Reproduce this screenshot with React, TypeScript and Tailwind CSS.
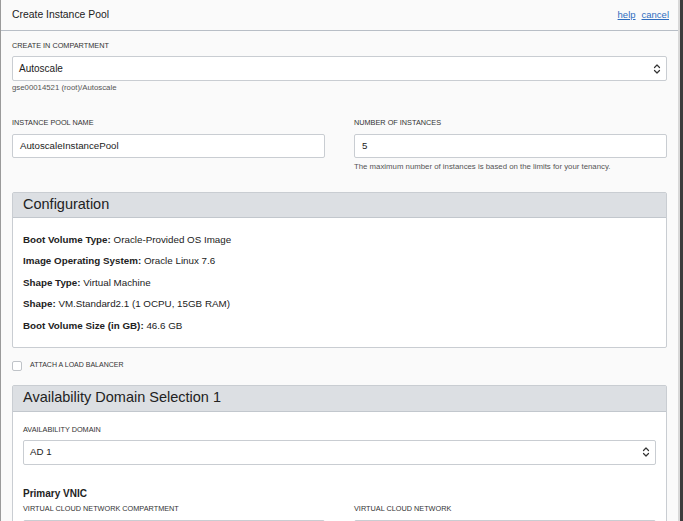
import React from "react";

const Chevrons = () => (
  <svg width="8" height="12" viewBox="0 0 8 12" fill="none" stroke="#333" strokeWidth="1.2" strokeLinecap="round" strokeLinejoin="round">
    <path d="M1.5 4.5 L4 2 L6.5 4.5" />
    <path d="M1.5 7.5 L4 10 L6.5 7.5" />
  </svg>
);

const Label = ({ children }: { children: React.ReactNode }) => (
  <div className="text-[7.3px] uppercase text-[#333] leading-none h-[8px]">{children}</div>
);

const Row = ({ k, v }: { k: string; v: string }) => (
  <div className="text-[9.8px] text-[#222] leading-none">
    <span className="font-bold">{k}</span> {v}
  </div>
);

export default function App() {
  return (
    <div className="w-[683px] h-[521px] bg-[#3c3c3c] overflow-hidden" style={{ fontFamily: '"Liberation Sans", Arial, sans-serif' }}>
      <div className="w-[680px] h-[521px] bg-[#fafafa] border-l border-l-[#9a9a9a] border-r-2 border-r-[#d8d8d8] overflow-hidden">
        {/* Header */}
        <div className="h-[31px] flex items-center justify-between pl-[11px] pr-[9px] border-b border-b-[#b8bec6]">
          <div className="text-[10.4px] text-[#222]">Create Instance Pool</div>
          <div className="flex gap-[6px] text-[9.5px] text-[#2f6dbf] underline">
            <span>help</span>
            <span>cancel</span>
          </div>
        </div>

        <div className="pl-[11px] pr-[11px]">
          {/* Compartment */}
          <div className="pt-[11px]">
            <Label>CREATE IN COMPARTMENT</Label>
            <div className="mt-[6px] h-[25px] bg-white border border-[#c9cdd2] rounded-[2px] flex items-center justify-between pl-[6px] pr-[5px]">
              <span className="text-[10px] text-[#222]">Autoscale</span>
              <Chevrons />
            </div>
            <div className="mt-[3px] text-[7.8px] text-[#555] leading-none">gse00014521 (root)/Autoscale</div>
          </div>

          {/* name / number */}
          <div className="mt-[27px] grid grid-cols-2 gap-[29px]">
            <div>
              <Label>INSTANCE POOL NAME</Label>
              <div className="mt-[7px] h-[24px] bg-white border border-[#c9cdd2] rounded-[2px] flex items-center pl-[7px]">
                <span className="text-[9.7px] text-[#222]">AutoscaleInstancePool</span>
              </div>
            </div>
            <div>
              <Label>NUMBER OF INSTANCES</Label>
              <div className="mt-[7px] h-[24px] bg-white border border-[#c9cdd2] rounded-[2px] flex items-center pl-[7px]">
                <span className="text-[9.7px] text-[#222]">5</span>
              </div>
              <div className="mt-[5px] text-[7.8px] text-[#555] leading-none">The maximum number of instances is based on the limits for your tenancy.</div>
            </div>
          </div>

          {/* Configuration */}
          <div className="mt-[21px] border border-[#c9cdd2] rounded-[2px] bg-white">
            <div className="h-[25px] bg-[#dcdfe3] border-b border-b-[#c2c7cd] flex items-center pl-[10px]">
              <span className="text-[14.5px] text-[#222]">Configuration</span>
            </div>
            <div className="pl-[10px] pt-[17px] pb-[17px] flex flex-col gap-[11.7px]">
              <Row k="Boot Volume Type:" v="Oracle-Provided OS Image" />
              <Row k="Image Operating System:" v="Oracle Linux 7.6" />
              <Row k="Shape Type:" v="Virtual Machine" />
              <Row k="Shape:" v="VM.Standard2.1 (1 OCPU, 15GB RAM)" />
              <Row k="Boot Volume Size (in GB):" v="46.6 GB" />
            </div>
          </div>

          {/* checkbox */}
          <div className="mt-[12px] flex items-center gap-[8px]">
            <div className="w-[10px] h-[10px] bg-white border border-[#bfc3c8] rounded-[2px]" />
            <span className="text-[7px] uppercase text-[#333]">ATTACH A LOAD BALANCER</span>
          </div>

          {/* Availability */}
          <div className="mt-[14px] border border-[#c9cdd2] rounded-[2px] bg-white">
            <div className="h-[26px] bg-[#dcdfe3] border-b border-b-[#c2c7cd] flex items-center pl-[10px]">
              <span className="text-[14.5px] text-[#222]">Availability Domain Selection 1</span>
            </div>
            <div className="pl-[10px] pr-[10px] pt-[14px]">
              <Label>AVAILABILITY DOMAIN</Label>
              <div className="mt-[6px] h-[25px] bg-white border border-[#c9cdd2] rounded-[2px] flex items-center justify-between pl-[6px] pr-[5px]">
                <span className="text-[9.7px] text-[#222]">AD 1</span>
                <Chevrons />
              </div>
              <div className="mt-[24px] text-[10px] font-bold text-[#222] leading-none">Primary VNIC</div>
              <div className="mt-[6px] grid grid-cols-2 gap-[29px]">
                <div>
                  <Label>VIRTUAL CLOUD NETWORK COMPARTMENT</Label>
                  <div className="mt-[7px] h-[25px] bg-white border border-[#c9cdd2] rounded-[2px]" />
                </div>
                <div>
                  <Label>VIRTUAL CLOUD NETWORK</Label>
                  <div className="mt-[7px] h-[25px] bg-white border border-[#c9cdd2] rounded-[2px]" />
                </div>
              </div>
            </div>
          </div>
        </div>
      </div>
    </div>
  );
}
